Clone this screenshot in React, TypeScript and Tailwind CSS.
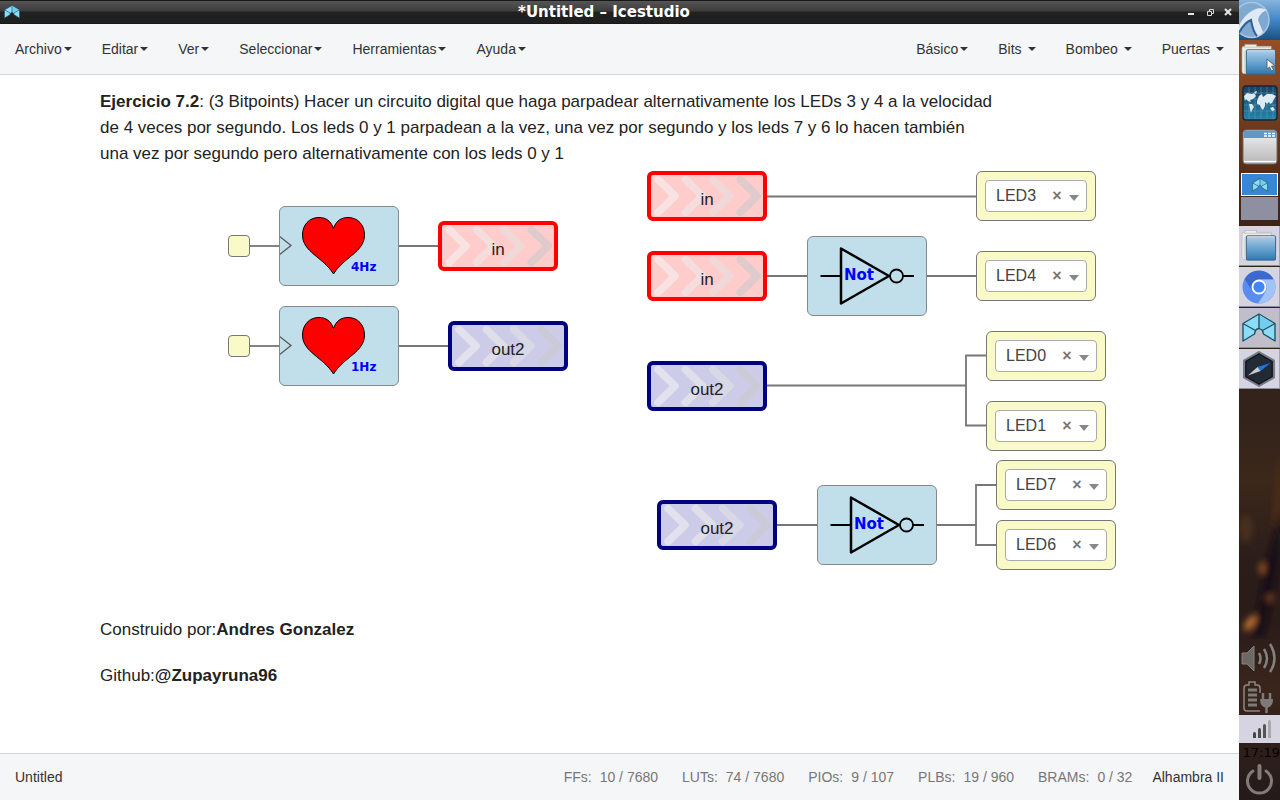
import React from 'react';
import clsx from 'clsx';

type Tone = 'red' | 'blue';
type Point = { x: number; y: number };

const LEFT_MENU = ['Archivo', 'Editar', 'Ver', 'Seleccionar', 'Herramientas', 'Ayuda'];
const RIGHT_MENU = [
  { name: 'Básico', spaced: false },
  { name: 'Bits', spaced: true },
  { name: 'Bombeo', spaced: true },
  { name: 'Puertas', spaced: true },
];

const RESOURCES = [
  { name: 'FFs:', value: '10 / 7680' },
  { name: 'LUTs:', value: '74 / 7680' },
  { name: 'PIOs:', value: '9 / 107' },
  { name: 'PLBs:', value: '19 / 960' },
  { name: 'BRAMs:', value: '0 / 32' },
];

const LABELS: (Point & { text: string; tone: Tone })[] = [
  { x: 438, y: 146, text: 'in', tone: 'red' },
  { x: 448, y: 246, text: 'out2', tone: 'blue' },
  { x: 647, y: 96, text: 'in', tone: 'red' },
  { x: 647, y: 176, text: 'in', tone: 'red' },
  { x: 647, y: 286, text: 'out2', tone: 'blue' },
  { x: 657, y: 425, text: 'out2', tone: 'blue' },
];

const OUTPUTS: (Point & { pin: string })[] = [
  { x: 976, y: 96, pin: 'LED3' },
  { x: 976, y: 176, pin: 'LED4' },
  { x: 986, y: 256, pin: 'LED0' },
  { x: 986, y: 326, pin: 'LED1' },
  { x: 996, y: 385, pin: 'LED7' },
  { x: 996, y: 445, pin: 'LED6' },
];

const HEARTS: (Point & { rate: string })[] = [
  { x: 279, y: 131, rate: '4Hz' },
  { x: 279, y: 231, rate: '1Hz' },
];

const GATES: Point[] = [
  { x: 807, y: 161 },
  { x: 817, y: 410 },
];

const PINS: Point[] = [
  { x: 228, y: 160 },
  { x: 228, y: 260 },
];

const WIRES = [
  'M249 171H280',
  'M398 171H440',
  'M249 271H280',
  'M398 271H450',
  'M766 121.5H977',
  'M766 201H808',
  'M926 201H977',
  'M766 310.5H966V280.5H987',
  'M966 310.5V350.5H987',
  'M776 450H818',
  'M936 450H976V410H997',
  'M976 450V470H997',
];

const CHEVRONS: Record<Tone, string[]> = {
  red: ['#f8e2e2', '#f5dddd', '#f0d8d8', '#dfcbcb'],
  blue: ['#e2e2ee', '#dfdfea', '#d9d9e6', '#cbcbd7'],
};

function Caret() {
  return <span className="inline-block border-x-4 border-t-4 border-x-transparent border-t-[#333]" />;
}

function MenuButton({ name, spaced = false }: { name: string; spaced?: boolean }) {
  return (
    <button type="button" className={clsx('flex items-center px-[15px] py-4', spaced ? 'gap-[6px]' : 'gap-[2px]')}>
      {name}
      <Caret />
    </button>
  );
}

function IceLogo({ className }: { className: string }) {
  return (
    <svg viewBox="0 0 34 30" className={className}>
      <path
        d="M1 10.500 17 1 33 10.500V28L21.500 21 20.500 17.500Q19 15.500 17 15.500 15 15.500 13.500 17.500L12.500 21 1 28Z"
        fill="#8cdcf7"
        stroke="#1f5468"
        strokeWidth="1.400"
        strokeLinejoin="round"
      />
      <path d="M17.500 2 31 10.500 20.500 16.500 17.500 15Z" fill="#74cdef" />
      <path d="M17 1V15.500M1 10.500 13.500 17.500M33 10.500 20.500 17.500" fill="none" stroke="#1f5468" strokeWidth="1.400" />
    </svg>
  );
}

function TitleBar() {
  return (
    <header className="flex h-6 items-center border-y border-[#191719] bg-[linear-gradient(#555_0,#3c3c3c_46%,#212121_50%,#1f1f1f)] px-1 text-white">
      <IceLogo className="h-4 w-4" />
      <h1 className="flex-1 text-center font-['DejaVu_Sans',sans-serif] text-[15px] leading-5 font-bold">
        *Untitled – Icestudio
      </h1>
      <div className="flex items-center gap-2 pr-[3px]">
        <button type="button" aria-label="Minimizar" className="flex h-2 w-2 items-end pb-px">
          <span className="h-[2px] w-[6px] bg-[#e5e5e5]" />
        </button>
        <button type="button" aria-label="Restaurar" className="w-3">
          <svg viewBox="0 0 12 10" className="h-[10px] w-3" fill="none" stroke="#d8d8d8">
            <path d="M5.500 4V2.500H9.500V6.500H8M3.500 4.500H7.500V8.500H3.500Z" />
          </svg>
        </button>
        <button type="button" aria-label="Cerrar" className="w-2">
          <svg viewBox="0 0 8 8" className="h-2 w-2" stroke="#e8e8e8" strokeWidth="2">
            <path d="M1 1 7 7M7 1 1 7" />
          </svg>
        </button>
      </div>
    </header>
  );
}

function LabelNode({ x, y, text, tone }: (typeof LABELS)[number]) {
  return (
    <div
      style={{ left: x, top: y }}
      className={clsx(
        'absolute flex h-[50px] w-[120px] items-center justify-center rounded-md border-4',
        tone === 'red' ? 'border-[#ff0000] bg-[#ffcccc]' : 'border-[#000080] bg-[#cccce8]',
      )}
    >
      <svg viewBox="0 0 112 42" className="absolute inset-0 h-full w-full" fill="none" strokeWidth="7.500" strokeLinecap="round" strokeLinejoin="round">
        {CHEVRONS[tone].map((color, i) => (
          <path key={color} d="M7 4.500 24 21 7 37.500" stroke={color} transform={`translate(${i * 27.4} 0)`} />
        ))}
      </svg>
      <span className="relative pt-2 text-[17px] leading-5 text-[#222]">{text}</span>
    </div>
  );
}

function OutputNode({ x, y, pin }: (typeof OUTPUTS)[number]) {
  return (
    <div
      style={{ left: x, top: y }}
      className="absolute h-[50px] w-[120px] rounded-md border border-[#777] bg-[#fafac8] px-2 py-2"
    >
      <div className="flex h-8 items-center rounded border border-[#aaa] bg-white pr-[7px] pl-[10px]">
        <select
          aria-label={`Pin ${pin}`}
          defaultValue={pin}
          className="min-w-0 flex-1 appearance-none bg-transparent text-base leading-5 text-[#444] outline-none"
        >
          <option>{pin}</option>
        </select>
        <button type="button" aria-label={`Quitar ${pin}`} className="w-[10px] text-base leading-5 font-bold text-[#777]">
          ×
        </button>
        <span className="mt-[3px] ml-[7px] border-x-[5px] border-t-[6px] border-x-transparent border-t-[#888]" />
      </div>
    </div>
  );
}

function HeartNode({ x, y, rate }: (typeof HEARTS)[number]) {
  return (
    <div style={{ left: x, top: y }} className="absolute h-20 w-[120px] rounded-md border border-[#888] bg-[#c0dfeb]">
      <svg viewBox="1 1 118 78" className="h-full w-full">
        <path d="M0 30 12 39.500 0 49" fill="none" stroke="#555" strokeWidth="1.300" />
        <path
          d="M54.500 22.500C52 15 47 11.500 40 11.500 30 11.500 23.500 19 23.500 29 23.500 46 44 51 54.500 68 65 51 85.500 46 85.500 29 85.500 19 79 11.500 69 11.500 62 11.500 57 15 54.500 22.500Z"
          fill="#ff0000"
          stroke="#000"
        />
        <text x="72" y="65" className="fill-[#0000ff] font-['DejaVu_Sans',sans-serif] text-xs font-bold">
          {rate}
        </text>
      </svg>
    </div>
  );
}

function NotNode({ x, y }: Point) {
  return (
    <div style={{ left: x, top: y }} className="absolute h-20 w-[120px] rounded-md border border-[#888] bg-[#c0dfeb]">
      <svg viewBox="1 1 118 78" className="h-full w-full" fill="none" stroke="#000" strokeWidth="2">
        <path d="M13.500 40H34M96 40H107" />
        <path d="M34 12.500 82 40 34 67.500Z" strokeWidth="2.500" strokeLinejoin="round" />
        <circle cx="89.500" cy="40" r="6.500" strokeWidth="1.800" />
        <text x="37" y="44" stroke="none" className="fill-[#0000ff] font-['DejaVu_Sans',sans-serif] text-[15px] font-bold">
          Not
        </text>
      </svg>
    </div>
  );
}

function Canvas() {
  return (
    <main className="relative flex-1 overflow-hidden bg-white pt-[14px] pl-[100px]">
      <p className="text-[17px] leading-[26px] whitespace-nowrap text-[#222]">
        <b>Ejercicio 7.2</b>: (3 Bitpoints) Hacer un circuito digital que haga parpadear alternativamente los LEDs 3 y 4 a la velocidad
        <br />
        de 4 veces por segundo. Los leds 0 y 1 parpadean a la vez, una vez por segundo y los leds 7 y 6 lo hacen también
        <br />
        una vez por segundo pero alternativamente con los leds 0 y 1
      </p>
      <div className="mt-[450px] flex flex-col gap-5 text-[17px] leading-[26px] text-[#222]">
        <p>
          Construido por:<b>Andres Gonzalez</b>
        </p>
        <p>
          Github:<b>@Zupayruna96</b>
        </p>
      </div>
      <svg className="pointer-events-none absolute inset-0 h-full w-full" fill="none" stroke="#777" strokeWidth="1.800">
        {WIRES.map((d) => (
          <path key={d} d={d} />
        ))}
      </svg>
      {PINS.map((p) => (
        <div
          key={p.y}
          style={{ left: p.x, top: p.y }}
          className="absolute h-[22px] w-[22px] rounded border border-[#777] bg-[#fafac8]"
        />
      ))}
      {HEARTS.map((h) => (
        <HeartNode key={h.rate} {...h} />
      ))}
      {GATES.map((g) => (
        <NotNode key={g.y} {...g} />
      ))}
      {LABELS.map((l) => (
        <LabelNode key={`${l.x}-${l.y}`} {...l} />
      ))}
      {OUTPUTS.map((o) => (
        <OutputNode key={o.pin} {...o} />
      ))}
    </main>
  );
}

function StatusBar() {
  return (
    <footer className="flex h-[47px] items-center justify-between border-t border-[#d3d6d9] bg-[#f5f6f8] px-[15px] text-sm text-[#333]">
      <span>Untitled</span>
      <div className="flex items-center gap-5">
        <dl className="flex gap-6 text-[#777]">
          {RESOURCES.map((r) => (
            <div key={r.name} className="flex gap-2">
              <dt>{r.name}</dt>
              <dd>{r.value}</dd>
            </div>
          ))}
        </dl>
        <span>Alhambra II</span>
      </div>
    </footer>
  );
}

function FolderIcon() {
  return (
    <svg viewBox="0 0 38 34" className="h-[34px] w-[37px]">
      <defs>
        <linearGradient id="folder" x1="0" y1="0" x2="0" y2="1">
          <stop offset="0" stopColor="#b3cfe5" />
          <stop offset="0.500" stopColor="#6ba5d0" />
          <stop offset="1" stopColor="#2f78b0" />
        </linearGradient>
      </defs>
      <path d="M1 5Q1 3 3 3H4V1H16V3H31V6H33V31H3Q1 31 1 28Z" fill="#ececea" stroke="#aaa" strokeWidth=".6" />
      <path d="M4 8V30M3 4H30" stroke="#c4c4c2" strokeWidth=".8" />
      <rect x="5.500" y="6.500" width="30" height="25" rx="1" fill="url(#folder)" stroke="#33678f" />
      <path d="M7 7.500H34" stroke="#d8e8f4" strokeWidth=".8" />
    </svg>
  );
}

function Task({ name, active = false, children }: { name: string; active?: boolean; children: React.ReactNode }) {
  return (
    <button
      type="button"
      aria-label={name}
      className={clsx(
        'flex h-10 w-full items-center justify-center border-r border-b border-r-[#a4a3b8] border-b-[#8b8aa3]',
        active ? 'bg-[#bfbeca]' : 'bg-[#d5d4e0]',
      )}
    >
      {children}
    </button>
  );
}

function Dock() {
  return (
    <aside className="flex w-[41px] shrink-0 flex-col bg-[linear-gradient(#a5562a_0,#8d4a24_8%,#713c1f_15%,#552b18_22%,#352019_30%,#33231b_52%,#3b281b_60%,#2b1d1a_70%,#2a1c19_78%,#3a251c_86%,#241a1a)]">
      <button type="button" aria-label="Menú" className="h-10 w-full bg-[linear-gradient(#86b4de,#4187c5_50%,#1c4f80)]">
        <svg viewBox="0 0 41 40" className="h-10 w-full">
          <circle cx="12.500" cy="20" r="17.500" fill="#7fa9d0" stroke="#a9c6e0" strokeWidth="1.500" />
          <path d="M0 26C2 21 7 14 13 11 17 8 21 7 28 10 23 12 20 15 19 20L24 32C22 35 19 36 17 36 12 31 13 24 12 20 7 22 3 27 0 33Z" fill="#dfe9f3" />
          <path d="M0 33C3 27 7 22 12 20 13 26 14 32 18 36" fill="none" stroke="#2f6294" strokeWidth="2" />
        </svg>
      </button>
      <button type="button" aria-label="Archivos" className="relative flex h-10 w-full items-center justify-center">
        <FolderIcon />
        <svg viewBox="0 0 10 14" className="absolute right-1 bottom-2 h-[14px] w-[10px]">
          <path d="M1 1V11L3.500 9 5.500 13 7.500 12 5.500 8H9Z" fill="#f4f4f4" stroke="#555" strokeWidth=".8" />
        </svg>
      </button>
      <button type="button" aria-label="Navegador" className="mt-[5px] flex w-full justify-center">
        <svg viewBox="0 0 36 37" className="h-[37px] w-9">
          <defs>
            <linearGradient id="sea" x1="0" y1="0" x2="0" y2="1">
              <stop offset="0" stopColor="#1d3f5d" />
              <stop offset="1" stopColor="#2583ab" />
            </linearGradient>
          </defs>
          <rect x="1" y="1" width="34" height="34" rx="3" fill="url(#sea)" stroke="#15283c" strokeWidth="1.500" />
          <path d="M7 2V34M13 2V34M19 2V34M25 2V34M31 2V34M2 8H34M2 14H34M2 20H34M2 26H34" stroke="#6aaece" strokeWidth=".4" />
          <path
            d="M2 11 5 8 10 9 12 8 14 11 11 14 8 15 9 17 6 16 4 14 3 16ZM7 19 10 19 12 22 10 25 9 28 8 24ZM15 16 17 11 20 9 21 12 25 9 30 9 34 11 32 14 30 18 28 19 27 17 25 19 23 17 23 21 21 25 19 23 18 20 15 19ZM28 23 31 22 33 25 30 26ZM12 7 15 6 14 9Z"
            fill="#dcebf0"
          />
        </svg>
      </button>
      <button type="button" aria-label="Escritorio" className="mt-[6px] flex w-full justify-center">
        <svg viewBox="0 0 36 38" className="h-[38px] w-9">
          <defs>
            <linearGradient id="pane" x1="0" y1="0" x2="0" y2="1">
              <stop offset="0" stopColor="#f2f2f2" />
              <stop offset="1" stopColor="#b7b7b7" />
            </linearGradient>
          </defs>
          <rect x="1" y="2" width="34" height="34" rx="3" fill="url(#pane)" stroke="#706861" />
          <path d="M1.500 10V5Q1.500 2.500 4 2.500H32Q34.500 2.500 34.500 5V10Z" fill="#5f98c6" />
          <path d="M22 5.500H25M26 5.500H29M30 5.500H33M22 8H25M26 8H29M30 8H33" stroke="#fff" strokeWidth="1.300" />
          <path d="M2 33.500H34" stroke="#fff" strokeWidth="1.300" />
        </svg>
      </button>
      <div className="mx-[2px] mt-[7px] flex h-[23px] items-center justify-center border border-white bg-[#3886d6]">
        <IceLogo className="h-[14px] w-4" />
      </div>
      <div className="mx-[2px] mt-px mb-[6px] h-[23px] bg-[#8f8fa2]" />
      <div className="flex flex-col gap-px">
        <Task name="Gestor de archivos">
          <FolderIcon />
        </Task>
        <Task name="Chromium">
          <svg viewBox="0 0 34 34" className="h-[34px] w-[34px]">
            <circle cx="17" cy="17" r="16.500" fill="#5a8df0" />
            <path d="M2.700 9A16.500 16.500 0 0 1 31.500 9.500H17A8 8 0 0 0 9.500 20Z" fill="#3b69ce" />
            <path d="M31.500 9.500A16.500 16.500 0 0 1 16 33.500L24 21A8 8 0 0 0 17 9.500Z" fill="#a2c3fa" />
            <circle cx="17" cy="17" r="6.500" fill="#4285f4" stroke="#fff" strokeWidth="1.800" />
          </svg>
        </Task>
        <Task name="Icestudio" active>
          <IceLogo className="h-[30px] w-[34px]" />
        </Task>
        <Task name="Visor">
          <svg viewBox="0 0 34 36" className="h-9 w-[34px]">
            <path d="M17 1 32 9.500V26.500L17 35 2 26.500V9.500Z" fill="#222a36" stroke="#777d84" strokeWidth="2" />
            <path d="M17 3 30 10.500V25.500L17 33 4 25.500V10.500Z" fill="none" stroke="#10151d" />
            <path d="M28.500 12 15.500 16 18.500 20Z" fill="#1d76e2" />
            <path d="M6 24.500 15.500 16 18.500 20Z" fill="#c9ccce" />
          </svg>
        </Task>
      </div>
      <div className="flex-1">
        <svg viewBox="0 0 41 250" preserveAspectRatio="none" className="h-full w-full">
          <defs>
            <filter id="soft">
              <feGaussianBlur stdDeviation="3" />
            </filter>
          </defs>
          <g filter="url(#soft)">
            <path d="M41 60V120L34 140 38 90Z" fill="#6b3517" opacity=".6" />
            <path d="M41 125 26 180 14 250H24L41 170Z" fill="#160f12" />
            <ellipse cx="7" cy="140" rx="7" ry="14" fill="#56391f" opacity=".6" />
            <ellipse cx="23" cy="179" rx="3" ry="6" fill="#9a5328" />
            <ellipse cx="31" cy="209" rx="4" ry="4" fill="#6d3b21" />
            <ellipse cx="11" cy="234" rx="4" ry="9" fill="#c27336" transform="rotate(35 11 234)" />
          </g>
        </svg>
      </div>
      <svg viewBox="0 0 41 40" className="h-10 w-full" fill="none" stroke="#85817e" strokeWidth="2.500" role="img" aria-label="Volumen">
        <path d="M3 14H8L15 7V32L8 25H3Z" fill="#6b6866" strokeWidth="1" />
        <path d="M20 14Q23 19.500 20 25M25 10Q31 19.500 25 29M31 5Q40 19.500 31 33" />
      </svg>
      <svg viewBox="0 0 41 36" className="h-9 w-full" role="img" aria-label="Batería">
        <path d="M21 32H8Q5 32 5 29V9Q5 6 8 6H10V3H16V6H18Q21 6 21 9V14" fill="none" stroke="#8b8785" strokeWidth="1.500" />
        <path d="M9 11H18M9 16H18M9 21H18M9 26H18" stroke="#7d7a78" strokeWidth="3" />
        <path d="M24 14V20M31 14V20M27.500 28V34" stroke="#7d7a78" strokeWidth="2.500" />
        <path d="M21 20H34Q34 28 27.500 29 21 28 21 20Z" fill="#7d7a78" />
      </svg>
      <div className="flex h-7 items-end justify-center gap-[2px] bg-[#d5d4e0] pb-[5px] pl-1" role="img" aria-label="Red">
        <span className="h-[6px] w-[3px] rounded-t bg-[#444]" />
        <span className="h-[10px] w-[3px] rounded-t bg-[#4c4c4c]" />
        <span className="h-[14px] w-[3px] rounded-t bg-[#555]" />
        <span className="h-[18px] w-[3px] rounded-t bg-[#a9a9ab]" />
      </div>
      <time className="self-end pt-px font-['DejaVu_Sans',sans-serif] text-[13px] leading-[18px] font-medium text-[#050303]">17:19</time>
      <button type="button" aria-label="Apagar" className="flex justify-center">
        <svg viewBox="0 0 30 38" className="h-[38px] w-[30px]" fill="none" stroke="#7f7c7a" strokeLinecap="round">
          <path d="M8 9A12 12 0 1 0 21 9" strokeWidth="3" />
          <path d="M14.500 4V16" strokeWidth="4" />
        </svg>
      </button>
    </aside>
  );
}

export default function App() {
  return (
    <div className="flex min-h-screen bg-white font-['Liberation_Sans',Arial,sans-serif]">
      <div className="flex min-w-0 flex-1 flex-col">
        <TitleBar />
        <nav className="flex h-[51px] items-center justify-between border-b border-[#d3d6d9] bg-[#f5f6f8] text-sm leading-5 text-[#333]">
          <div className="flex">
            {LEFT_MENU.map((name) => (
              <MenuButton key={name} name={name} />
            ))}
          </div>
          <div className="flex">
            {RIGHT_MENU.map((m) => (
              <MenuButton key={m.name} {...m} />
            ))}
          </div>
        </nav>
        <Canvas />
        <StatusBar />
      </div>
      <Dock />
    </div>
  );
}
